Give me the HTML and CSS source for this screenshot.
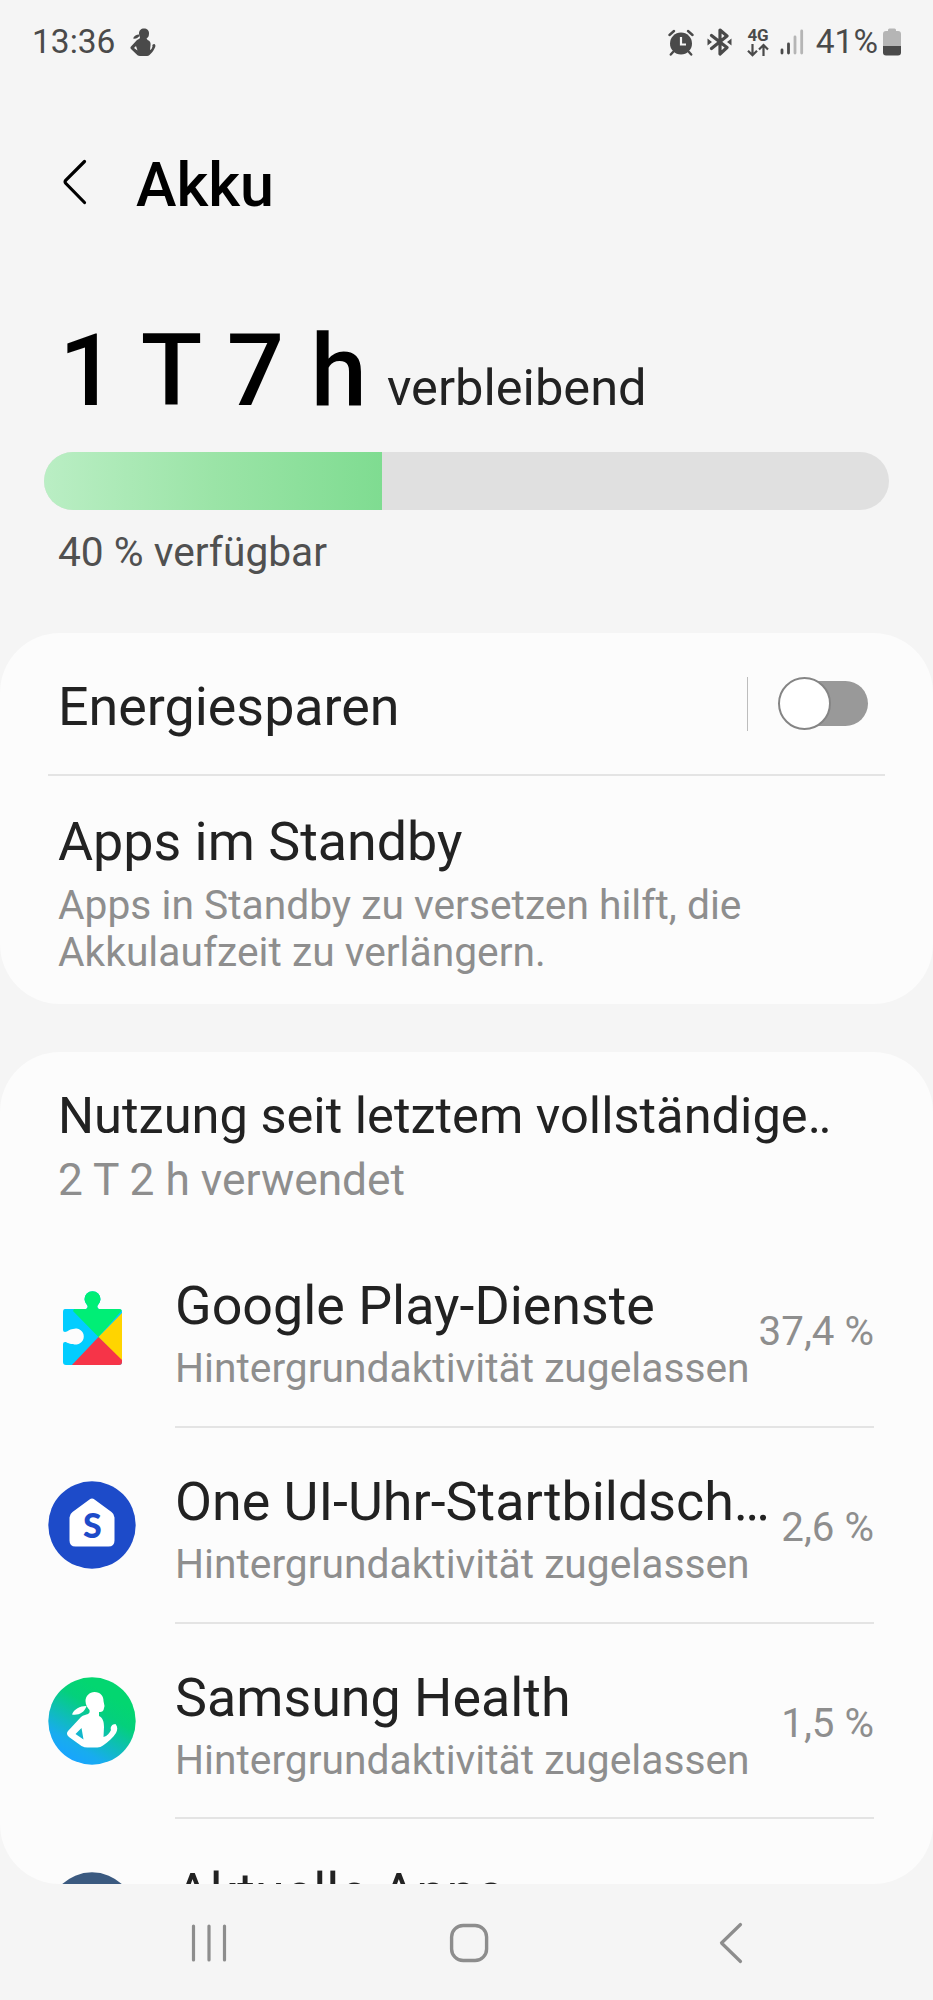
FILE: index.html
```html
<!DOCTYPE html>
<html lang="de">
<head>
<meta charset="utf-8">
<title>Akku</title>
<link rel="stylesheet" href="styles.css">
</head>
<body>
<div class="screen">
  <header class="status">
    <div class="status-left">
      <span class="clock">13:36</span>
      <svg class="i-health" width="26" height="28" viewBox="0 0 52 56">
        <g fill="#4a4a4a">
          <path d="M28 1c6 0 10 4 10 9 0 5-1 10-5 10l2 4c5 1 7 6 6 11l-1 9c3-1 4-4 5-7-1-3 0-5 4-5 3 2 2 6 0 9-2 5-6 9-10 13q-2 2-5 2H20q-3 0-5-1.500L2 42c-2-2-1-4 0-5l12-13c3-2 5-2 6-4 0-3-2-5-2-9 0-6 4-10 10-10zM12 36l-4 4 7 5z" fill-rule="evenodd"/>
          <path d="M18 13c-5 0-10 3-12 8 5 1 10-1 13-5z"/>
        </g>
      </svg>
    </div>
    <div class="status-right">
      <svg class="i-alarm" width="26" height="27" viewBox="0 0 26 27">
        <circle cx="13" cy="14.500" r="11" fill="#4a4a4a"/>
        <path d="M1.500 6 6 2M24.500 6 20 2M5 23l-2.200 2.500M21 23l2.200 2.500" stroke="#4a4a4a" stroke-width="2.400" stroke-linecap="round"/>
        <path d="M13 8v7.500h5" fill="none" stroke="#f5f5f5" stroke-width="2.200"/>
      </svg>
      <svg class="i-bt" width="25" height="28" viewBox="0 0 25 28">
        <path d="M4.500 7.500 20 19.500 13 26V2L20 8 4.500 20.500" fill="none" stroke="#4a4a4a" stroke-width="3.200" stroke-linejoin="round" stroke-linecap="round"/>
        <path d="M.5 10.500 5 14l-4.500 3.500zM24.500 10.500 20 14l4.500 3.500z" fill="#4a4a4a"/>
      </svg>
      <div class="i-4g">
        <span class="net">4G</span>
        <svg width="24" height="14" viewBox="0 0 24 14">
          <path d="M6.500 1v11M2 7.700l4.500 4.500L11 7.700M17.500 13V2M13 6.500 17.500 2 22 6.500" fill="none" stroke="#4a4a4a" stroke-width="2.200"/>
        </svg>
      </div>
      <svg class="i-signal" width="24" height="26" viewBox="0 0 24 26">
        <g stroke-width="2.800" stroke-linecap="round">
          <path d="M2 21v3M8.500 15v9" stroke="#4a4a4a"/>
          <path d="M15 8v16M21.700 2v22" stroke="#b5b5b5"/>
        </g>
      </svg>
      <span class="pct">41%</span>
      <svg class="i-batt" width="18" height="28" viewBox="0 0 18 28">
        <path d="M5 3V2a1.500 1.500 0 0 1 1.500-1.500h5A1.500 1.500 0 0 1 13 2v1h2a3 3 0 0 1 3 3v13H0V6a3 3 0 0 1 3-3z" fill="#b5b5b5"/>
        <path d="M0 18h18v6.500a3 3 0 0 1-3 3H3a3 3 0 0 1-3-3z" fill="#4a4a4a"/>
      </svg>
    </div>
  </header>

  <div class="titlebar">
    <svg class="back" width="26" height="48" viewBox="0 0 26 48">
      <path d="M22.500 3.500 3.700 22.300Q2.500 23.800 3.700 25.300L22.500 44.500" fill="none" stroke="#000" stroke-width="3.200" stroke-linecap="round"/>
    </svg>
    <h1 class="title">Akku</h1>
  </div>

  <section class="summary">
    <div class="remaining"><span class="time">1 T 7 h</span><span class="left">verbleibend</span></div>
    <div class="bar"><div class="bar-fill" style="width:40%"></div></div>
    <div class="available">40 % verfügbar</div>
  </section>

  <section class="card">
    <div class="saving">
      <span class="label">Energiesparen</span>
      <span class="sep"></span>
      <span class="switch"><span class="knob"></span></span>
    </div>
    <div class="divider"></div>
    <div class="standby">
      <div class="label">Apps im Standby</div>
      <div class="hint">Apps in Standby zu versetzen hilft, die<br>Akkulaufzeit zu verlängern.</div>
    </div>
  </section>

  <section class="card usage">
    <div class="usage-title">Nutzung seit letztem vollständige<span class="dots">..</span></div>
    <div class="usage-sub">2 T 2 h verwendet</div>

    <div class="app">
      <svg class="app-icon" width="88" height="88" viewBox="1 -1 88 88">
        <defs><clipPath id="puzzle"><path d="M18 22h21c2-1 2-3 1-4a8 8 0 1 1 11 0c-1 1-1 3 1 4h20q3 0 3 3v50q0 3-3 3H19q-3 0-3-3V57q0-2 2-2c2 0 3 2 8 2a8 8 0 1 0 0-15c-4 0-5 3-8 3q-2 0-2-2V25q0-3 2-3z"/></clipPath></defs>
        <g clip-path="url(#puzzle)">
          <path d="M0 0h88v88H0z" fill="#02cdff"/>
          <path d="M27 22V0h35v22h14L51.500 50 26 24z" fill="#00ee76"/>
          <path d="M77 24 51.500 50 77 76z" fill="#ffd400"/>
          <path d="M51.500 50 24 79h54v-3z" fill="#f63448"/>
        </g>
      </svg>
      <div class="app-body">
        <div class="app-text"><div class="label">Google Play-Dienste</div><div class="hint">Hintergrundaktivität zugelassen</div></div>
        <span class="value">37,4 %</span>
      </div>
    </div>

    <div class="app">
      <svg class="app-icon" width="88" height="88" viewBox="0 0 88 88">
        <circle cx="44" cy="44" r="43.700" fill="#1d4bc9"/>
        <path d="M41.500 18.500q2.500-2 5 0l17 12.500q3 2.200 3 5.500v23q0 6-6 6h-33q-6 0-6-6v-23q0-3.300 3-5.500z" fill="#fff"/>
        <text class="home-s" x="44.300" y="57" text-anchor="middle">S</text>
      </svg>
      <div class="app-body">
        <div class="app-text"><div class="label">One UI-Uhr-Startbildsch…</div><div class="hint">Hintergrundaktivität zugelassen</div></div>
        <span class="value">2,6 %</span>
      </div>
    </div>

    <div class="app">
      <svg class="app-icon" width="88" height="88" viewBox="0 0 88 88">
        <defs><linearGradient id="health" x1="0.250" y1="0.950" x2="0.700" y2="0.200"><stop offset="0" stop-color="#18a4ff"/><stop offset="0.200" stop-color="#18acee"/><stop offset="0.750" stop-color="#04d07c"/><stop offset="1" stop-color="#03d670"/></linearGradient></defs>
        <circle cx="44" cy="44" r="43.700" fill="url(#health)"/>
        <path fill-rule="evenodd" fill="#fff" d="M46.500 15c6 0 9 4 9 9l1 5-1 4c-1 2-3 2-4.500 2v4c4 2 5 6 5 11l-.5 10c4-1 6-4 7.500-7-1-3 1-6 4.500-6 2.500 3 2 6 .5 9-3 5-8 9-13 12.500q-2.500 2-5.500 2h-10q-3 0-6-1.500L21 60q-3.500-3-1-6l13-14q1.500-1.500 4-2c4-1 5-2 4.500-5-2-2-4-5-4-9 0-5 4-9 9-9zM33.500 51l-6 6 8 5.500z"/>
        <path d="M38 29c-6 0-12 3-14 8.500 7 1 12-2 14.500-8z" fill="#fff"/>
      </svg>
      <div class="app-body">
        <div class="app-text"><div class="label">Samsung Health</div><div class="hint">Hintergrundaktivität zugelassen</div></div>
        <span class="value">1,5 %</span>
      </div>
    </div>

    <div class="app">
      <svg class="app-icon" width="88" height="88" viewBox="0 0 88 88"><circle cx="44" cy="44" r="43.700" fill="#3b5a80"/></svg>
      <div class="app-body">
        <div class="app-text"><div class="label">Aktuelle Apps</div></div>
      </div>
    </div>
  </section>

  <nav class="nav">
    <svg class="nav-recent" width="36" height="40" viewBox="0 0 36 40"><path d="M2.500 3v34M18 3v34M33.500 3v34" stroke="#8d8d8d" stroke-width="3.200" stroke-linecap="round"/></svg>
    <svg class="nav-home" width="40" height="40" viewBox="0 0 40 40"><rect x="2.600" y="2.500" width="35" height="35" rx="11.500" fill="none" stroke="#8d8d8d" stroke-width="3.400"/></svg>
    <svg class="nav-back" width="24" height="42" viewBox="0 0 24 42"><path d="M21.500 2.500 2.500 21 21.500 39.500" fill="none" stroke="#8d8d8d" stroke-width="3.200" stroke-linecap="round" stroke-linejoin="round"/></svg>
  </nav>
</div>
</body>
</html>
```
FILE: styles.css
```css
* { box-sizing: border-box; }
body {
  margin: 0;
  background: #f5f5f5;
  font-family: Roboto, "Liberation Sans", sans-serif;
  color: #222;
}
svg { display: block; flex: none; }
.screen {
  width: 933px;
  height: 2000px;
  display: flex;
  flex-direction: column;
  overflow: hidden;
}

.status {
  height: 84px;
  flex: none;
  display: flex;
  align-items: center;
  justify-content: space-between;
  padding: 0 32px 0 32px;
  font-size: 33.500px;
  line-height: 40px;
  color: #4a4a4a;
}
.status-left, .status-right { display: flex; align-items: center; }
.i-health { margin-left: 15px; }
.i-bt { margin-left: 13px; }
.i-4g {
  display: flex;
  flex-direction: column;
  align-items: center;
  width: 24px;
  margin-left: 14px;
}
.i-signal { margin-left: 10px; }
.pct { margin-left: 12px; }
.i-batt { margin-left: 5px; }
.net { font-size: 17px; line-height: 16px; font-weight: 700; letter-spacing: -0.300px; }

.titlebar {
  height: 201px;
  flex: none;
  display: flex;
  align-items: center;
  padding-left: 62px;
}
.back { margin-bottom: 6px; }
.title {
  margin: 0 0 0 48px;
  font-size: 61px;
  font-weight: 500;
  line-height: 72px;
  color: #000;
}

.summary { padding: 26px 44px 57px; flex: none; }
.remaining {
  display: flex;
  align-items: baseline;
  padding-left: 15px;
  height: 120px;
  line-height: 120px;
  white-space: nowrap;
}
.time { font-size: 101px; font-weight: 500; word-spacing: 1.600px; color: #000; }
.left { font-size: 50.600px; margin-left: 20px; }
.bar {
  margin-top: 21px;
  height: 58px;
  border-radius: 29px;
  background: #e0e0e0;
  overflow: hidden;
}
.bar-fill {
  height: 100%;
  background: linear-gradient(90deg, #baeec4, #9be4a7 50%, #7fdc91);
}
.available {
  margin: 18px 0 0 14px;
  font-size: 40.700px;
  line-height: 48px;
  color: #505050;
}

.card {
  flex: none;
  background: #fcfcfc;
  border-radius: 60px;
  overflow: hidden;
}
.label { font-size: 53.800px; line-height: 64px; white-space: nowrap; }
.hint { font-size: 40.750px; line-height: 47px; color: #8e8e8e; white-space: nowrap; }

.saving {
  height: 141px;
  display: flex;
  align-items: center;
  padding: 0 65px 0 58px;
}
.saving .label { flex: 1; padding-top: 6px; }
.sep { width: 1px; height: 54px; background: #bdbdbd; }
.switch {
  display: flex;
  align-items: center;
  width: 86px;
  height: 45px;
  margin-left: 34px;
  border-radius: 23px;
  background: #999;
}
.knob {
  flex: none;
  width: 53px;
  height: 53px;
  margin-left: -4px;
  border: 2px solid #858585;
  border-radius: 50%;
  background: #fff;
}
.divider { height: 2px; margin: 0 48px; background: #e4e4e4; }
.standby { padding: 34px 58px 28px; height: 228px; }
.standby .hint { margin-top: 8px; }

.usage { margin-top: 48px; height: 832px; padding-top: 34px; }
.usage-title { padding-left: 58px; font-size: 50.600px; line-height: 60px; white-space: nowrap; }
.dots { letter-spacing: -2.500px; }
.usage-sub { padding-left: 58px; margin: 8px 0 26.400px; font-size: 44.300px; line-height: 52px; color: #8e8e8e; }
.app { display: flex; height: 195.600px; padding: 0 59px 0 48px; }
.app-icon { margin-top: 53.300px; }
.app-body {
  flex: 1;
  display: flex;
  margin-left: 39px;
  border-bottom: 2px solid #e4e4e4;
}
.app-text { flex: 1; min-width: 0; padding-top: 42px; }
.app-text .hint { margin-top: 7px; }
.value { font-size: 40.300px; line-height: 48px; margin-top: 76px; color: #8e8e8e; white-space: nowrap; }
.home-s { font-family: Lato, Roboto, sans-serif; font-size: 34px; font-weight: 900; fill: #1d4bc9; }

.nav {
  flex: 1;
  display: flex;
  align-items: center;
  padding: 2px 0 0 191px;
}
.nav-home { margin-left: 222px; }
.nav-back { margin-left: 230px; }
```
